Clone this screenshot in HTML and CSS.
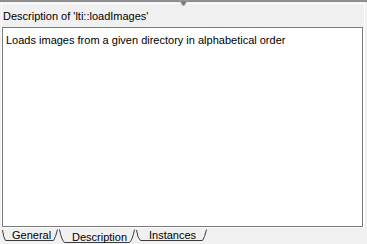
FILE: index.html
```html
<!doctype html>
<html lang="en-US">
  <head>
    <title>Description</title>
    <link rel="stylesheet" href="styles.css">
  </head>
  <body>
    <div class="splitter">
      <svg class="knob" width="9" height="7" viewBox="0 0 9 7">
        <path d="M0 0 H9 L6 5 Q4.5 7 3 5 Z" fill="#9a9a9a" />
        <path d="M2 1 H7 L5.2 4.5 Q4.5 5.5 3.8 4.5 Z" fill="#7c7c7c" />
      </svg>
    </div>
    <div class="panel">
      <div class="title">Description of 'lti::loadImages'</div>
      <div class="textbox">Loads images from a given directory in alphabetical order</div>
    </div>
    <div class="tabs">
      <svg class="tabLines" width="367" height="16" viewBox="0 0 367 16">
        <g fill="none" stroke="#3c3c3c" stroke-width="1">
          <path d="M2.5 2 Q3.5 10 5.5 12.5 H53.5 Q55.5 10 57.5 1.5" />
          <path d="M59.5 1.5 Q61.5 12 64.5 14.5 H129.5 Q132.5 12 134.5 1.5" />
          <path d="M136.5 2 Q137.5 10 140.5 12.5 H202.5 Q204.5 10 206.5 1.5" />
        </g>
      </svg>
      <span class="tab general">General</span>
      <span class="tab selected">Description</span>
      <span class="tab">Instances</span>
    </div>
  </body>
</html>
```
FILE: styles.css
```css
body {
  margin: 0;
  background-color: #f0f0f0;
  font-family: "Liberation Sans", Arial, sans-serif;
  font-size: 11px;
  color: #000;
  width: 367px;
  height: 244px;
  overflow: hidden;
}

.splitter {
  position: relative;
  height: 2px;
  background-color: #8e8e8e;
}

.knob {
  position: absolute;
  left: 179px;
  top: 0;
}

.panel {
  margin: 1px 2px 0 1px;
  border-top: 1px solid #ffffff;
  border-left: 1px solid #ffffff;
  border-right: 1px solid #ffffff;
}

.title {
  height: 23px;
  line-height: 16px;
  padding: 4px 0 0 1px;
  box-sizing: border-box;
}

.textbox {
  height: 200px;
  margin-right: 1px;
  box-sizing: border-box;
  background-color: #ffffff;
  border: 1px solid #7a7a7a;
  box-shadow: 1px 1px 0 #ffffff;
  padding: 5px 0 0 3px;
  line-height: 14px;
}

.tabs {
  position: relative;
  display: flex;
  height: 16px;
  margin-top: 1px;
  padding-left: 12px;
}

.tabLines {
  position: absolute;
  left: 0;
  top: 0;
}

.tab {
  position: relative;
  line-height: 13px;
  padding-top: 1px;
}

.general {
  width: 60px;
}

.selected {
  width: 77px;
  padding-top: 3px;
}
```
